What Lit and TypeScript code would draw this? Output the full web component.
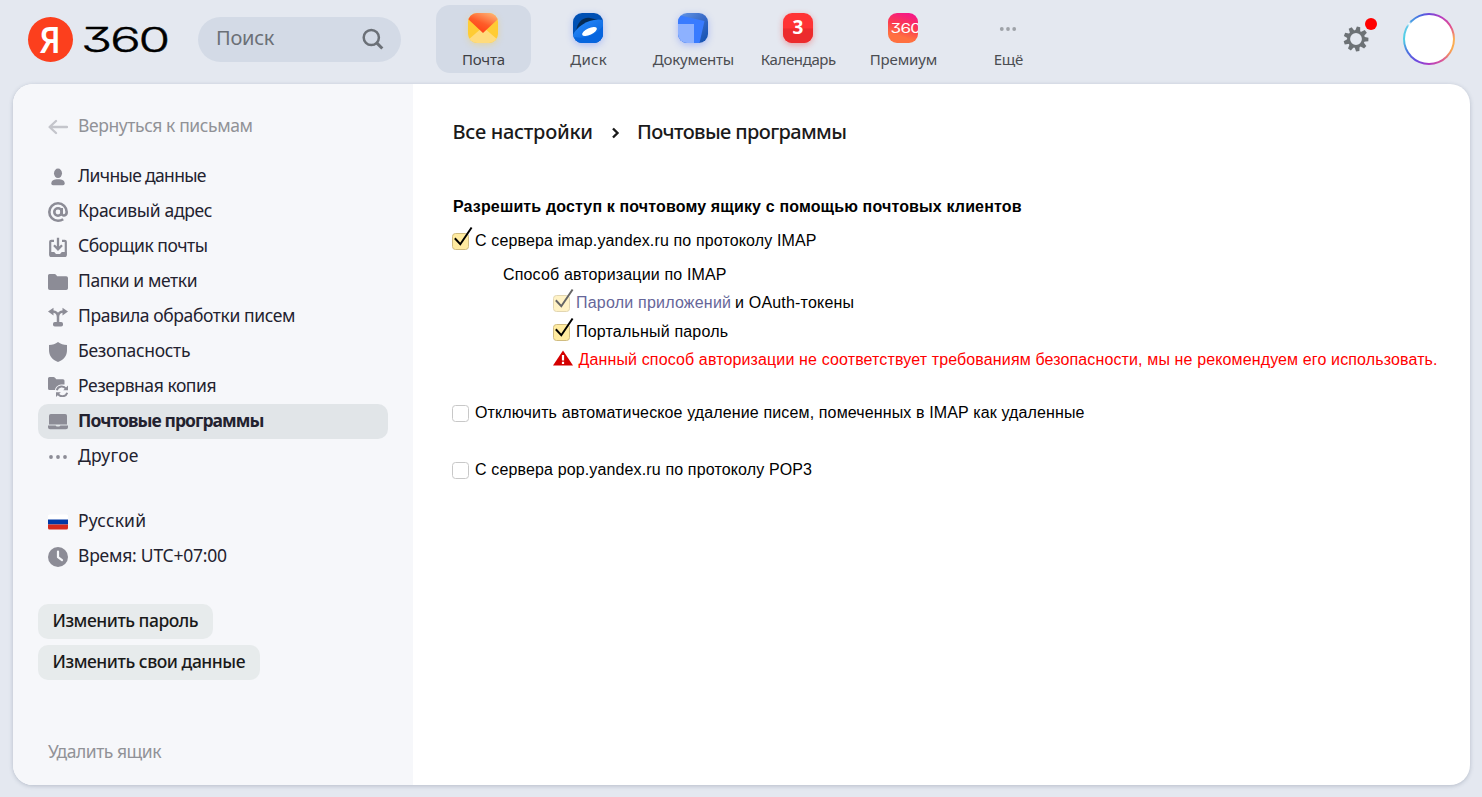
import { LitElement, html, css, svg, nothing } from "lit";
import { customElement, property } from "lit/decorators.js";

/** A single line of text tracked so that it fills a given width. */
@customElement("fit-text")
class FitText extends LitElement {
  @property({ type: Number }) w = 0;
  @property() text = "";

  static styles = css`
    :host { display: block; white-space: pre; }
    .t { display: inline-block; vertical-align: top; }
  `;

  firstUpdated() {
    const el = this.renderRoot.querySelector(".t") as HTMLElement;
    const natural = el.getBoundingClientRect().width;
    const n = Math.max(1, this.text.length - 1);
    this.style.width = `${this.w}px`;
    el.style.letterSpacing = `${((this.w - natural) / n).toFixed(4)}px`;
  }

  render() {
    return html`<span class="t">${this.text}</span>`;
  }
}

const fit = (text: string, w: number, cls = "") =>
  html`<fit-text class=${cls} .text=${text} .w=${w}></fit-text>`;

const G = "#8c8c96";

const icons: Record<string, unknown> = {
  back: svg`<path d="M19 10H1.800M8 4L1.600 10L8 16" fill="none" stroke="#c4c5cb" stroke-width="2.300" stroke-linecap="round" stroke-linejoin="round"/>`,
  person: svg`<ellipse cx="10" cy="6.300" rx="4" ry="4.800" fill=${G}/><path d="M3.300 16.600C3.300 13.600 6 12.300 10 12.300S16.700 13.600 16.700 16.600Q16.700 18.300 15 18.300H5Q3.300 18.300 3.300 16.600Z" fill=${G}/>`,
  at: svg`<g fill="none" stroke=${G} stroke-width="2.600"><circle cx="10" cy="10" r="3.700"/><path d="M13.700 6V11.200C13.700 14.600 18.700 14.400 18.700 10A8.700 8.700 0 1 0 10 18.700C12 18.700 13.600 18.300 15.200 17.200"/></g>`,
  collect: svg`<path d="M6 3.800H3.200Q2.200 3.800 2.200 4.800V17.500Q2.200 18.800 3.400 18.800H16.600Q17.800 18.800 17.800 17.500V4.800Q17.800 3.800 16.800 3.800H14" fill="none" stroke=${G} stroke-width="2.200"/><path d="M1.500 15H6.200L8 17H12L13.800 15H18.500V18.500Q18.500 20 17 20H3Q1.500 20 1.500 18.500Z" fill=${G}/><path d="M10 .8V12M6 8.300L10 12.300L14 8.300" fill="none" stroke=${G} stroke-width="2.300"/>`,
  folder: svg`<path d="M0 3.500Q0 2 1.500 2H6.500Q7.500 2 8.200 2.900L9.200 4.200H18.200Q20 4.200 20 6V16.200Q20 18 18.200 18H1.800Q0 18 0 16.200Z" fill=${G}/>`,
  rules: svg`<path d="M3 4.600H4.500C8 4.600 9.900 6.800 10 10V16M17 4.600H15.500C12 4.600 10.100 6.800 10 10" fill="none" stroke=${G} stroke-width="2.500"/><path d="M0 4.600L5.500 .8V8.400ZM20 4.600L14.500 .8V8.400Z" fill=${G}/><rect x="5" y="15" width="10" height="4.500" rx="1.800" fill=${G}/>`,
  shield: svg`<path d="M10 0C12.500 2 15.500 2.800 19 3V8C19 13.500 16 17.800 10 20C4 17.800 1 13.500 1 8V3C4.500 2.800 7.500 2 10 0Z" fill=${G}/>`,
  backup: svg`<path d="M0 1.500Q0 0 1.500 0H5.500Q6.300 0 7 .8L8.300 2.200H15Q16.500 2.200 16.500 3.700V7.500C11 7 7.500 9 7 13H1.500Q0 13 0 11.500Z" fill=${G}/><g fill="none" stroke=${G} stroke-width="2"><path d="M8.800 13.200C10 8.700 15.800 8.300 18 11.700"/><path d="M19.200 15.700C18 20 12.200 20.400 10 17"/></g><path d="M20 8.500V13.300H15.200ZM8 20V15.300H12.800Z" fill=${G}/>`,
  laptop: svg`<path d="M1 3.800Q1 2 2.800 2H17.200Q19 2 19 3.800V12.500H1Z" fill=${G}/><path d="M0 13.500H7.600Q8.200 14.600 9 14.600H11Q11.800 14.600 12.400 13.500H20V15.200Q20 17.200 18 17.200H2Q0 17.200 0 15.200Z" fill=${G}/>`,
  dots: svg`<g fill=${G}><circle cx="3" cy="10" r="1.900"/><circle cx="10" cy="10" r="1.900"/><circle cx="17" cy="10" r="1.900"/></g>`,
  flag: svg`<path d="M0 4Q0 2.500 1.500 2.500H18.500Q20 2.500 20 4V7.500H0Z" fill="#fff"/><path d="M0 7.500H20V12.500H0Z" fill="#0039a6"/><path d="M0 12.500H20V16Q20 17.500 18.500 17.500H1.500Q0 17.500 0 16Z" fill="#d52b1e"/>`,
  clock: svg`<circle cx="10" cy="10" r="10" fill=${G}/><path d="M10 4.500V10.200L14 13.200" fill="none" stroke="#f6f7fa" stroke-width="2.200" stroke-linecap="round" stroke-linejoin="round"/>`,
};

const apps = [
  {
    name: "Почта", w: 43, kind: "mail", on: true,
    art: svg`<defs><linearGradient id="m" x1=".25" y1="1" x2=".9" y2="0"><stop offset="0" stop-color="#ff3d12"/><stop offset=".45" stop-color="#ff5c28"/><stop offset="1" stop-color="#ffb878"/></linearGradient></defs>
      <rect width="30" height="30" fill="#ffcc33"/><path d="M0 30V27L15 14L30 27V30Z" fill="#ffdb7c"/><path d="M0 0H30V6L15 20L0 6Z" fill="url(#m)"/>`,
  },
  {
    name: "Диск", w: 36.5, kind: "disk",
    art: svg`<defs><linearGradient id="d" x1="0" y1="0" x2=".8" y2="1"><stop offset="0" stop-color="#2b8cff"/><stop offset="1" stop-color="#0561d8"/></linearGradient></defs>
      <rect width="30" height="30" fill="#0050b4"/><path d="M3 19C4 9 10 4 17 5L30 8V16Z" fill="#052b57"/><path d="M0 22C3 14 17 4 30 7V30H0Z" fill="url(#d)"/><path d="M1 24C14 27 25 20 30 13V30H4Z" fill="#0765de"/><ellipse cx="16.500" cy="18.500" rx="8" ry="3.300" transform="rotate(-25 16.500 18.500)" fill="#fff"/>`,
  },
  {
    name: "Документы", w: 81.5, kind: "docs",
    art: svg`<defs><linearGradient id="o" x1="0" y1="0" x2="1" y2="1"><stop offset="0" stop-color="#6597e8"/><stop offset=".5" stop-color="#3a6bc8"/><stop offset="1" stop-color="#0f4fb0"/></linearGradient></defs>
      <rect width="30" height="30" fill="url(#o)"/><path d="M0 2L26.500 8L21.500 30H0Z" fill="#397bff"/><path d="M0 11H16V30H0Z" fill="#8db1ff"/>`,
  },
  {
    name: "Календарь", w: 75.5, kind: "cal",
    art: svg`<rect width="30" height="30" fill="#ff3335"/><rect y="15.500" width="30" height="14.500" fill="#ec2b2d"/><text x="15" y="20.500" text-anchor="middle" class="num">3</text>`,
  },
  {
    name: "Премиум", w: 67.5, kind: "prem",
    art: svg`<defs><linearGradient id="p" x1=".7" y1="0" x2=".4" y2="1"><stop offset="0" stop-color="#f5168a"/><stop offset=".45" stop-color="#fb3b50"/><stop offset=".8" stop-color="#ff7040"/></linearGradient></defs>
      <rect width="30" height="30" fill="url(#p)"/><text x="2.500" y="19.800" textLength="30" lengthAdjust="spacingAndGlyphs" class="p360">360</text>`,
  },
  {
    name: "Ещё", w: 29.5, kind: "more",
    art: svg`<g fill="#9ea2a8"><circle cx="8.800" cy="16" r="1.900"/><circle cx="15" cy="16" r="1.900"/><circle cx="21.200" cy="16" r="1.900"/></g>`,
  },
];

const menu: [string, string, number][] = [
  ["person", "Личные данные", 128.5],
  ["at", "Красивый адрес", 134.5],
  ["collect", "Сборщик почты", 130],
  ["folder", "Папки и метки", 119.5],
  ["rules", "Правила обработки писем", 217.5],
  ["shield", "Безопасность", 112.5],
  ["backup", "Резервная копия", 138.5],
  ["laptop", "Почтовые программы", 186.5],
  ["dots", "Другое", 60.5],
];

@customElement("app-root")
class AppRoot extends LitElement {
  static styles = css`
    :host {
      display: flex; flex-direction: column; box-sizing: border-box;
      width: 100%; height: 797px; overflow: hidden; background: #e4e8f0;
      font-family: "Noto Sans", "Open Sans", sans-serif; color: #23222f;
    }
    svg { display: block; flex: none; }
    header { display: flex; height: 84px; flex: none; padding: 0 27px 0 28px; box-sizing: border-box; }
    .logo { margin-top: 16px; width: 142px; height: 46px; overflow: visible; }
    .ya { font: 600 36px "Noto Sans", sans-serif; fill: #fff; }
    .l360 { font: 300 34px "Inter", sans-serif; font-feature-settings: "cv09"; letter-spacing: -1.500px; fill: #000; stroke: #000; stroke-width: .4px; }
    .search {
      margin: 17px 0 0 28px; width: 203px; height: 45px; border-radius: 23px; background: #d3dae6;
      display: flex; justify-content: space-between; box-sizing: border-box; padding: 7px 17px 0 18px;
      font-size: 20px; line-height: 27px; color: #6b7077;
    }
    .search svg { margin-top: 4px; }
    nav { display: flex; gap: 10px; margin: 5px 0 0 35px; }
    .app {
      width: 95px; height: 68px; border-radius: 14px; display: flex; flex-direction: column; align-items: center;
      box-sizing: border-box; padding-right: 1px;
      font-size: 15px; line-height: 20px; color: #4b4d52;
    }
    .app fit-text { margin-left: 1px; }
    .app.on { background: #d3dae6; color: #3e4045; }
    .tile { margin: 8px 0 6px; width: 30px; height: 30px; border-radius: 9px; }
    .tile svg { border-radius: 9px; }
    .mail { box-shadow: 0 2px 6px rgba(255, 204, 51, .35); }
    .disk, .docs { box-shadow: 0 2px 7px rgba(60, 100, 255, .35); }
    .cal { box-shadow: 0 2px 6px rgba(240, 50, 50, .4); }
    .num { font: 700 19px "Noto Sans", sans-serif; fill: #fff; }
    .p360 { font: 400 13px "Inter", sans-serif; font-feature-settings: "cv09"; letter-spacing: -.500px; fill: #fff; }
    .gear { margin: 17px 0 0 auto; }
    .avatar {
      margin: 13px 0 0 25px; width: 52px; height: 52px; border-radius: 50%; padding: 1.600px; box-sizing: border-box;
      background: conic-gradient(#6f4adb, #b93cc0 30deg, #e04e90 60deg, #fbb055 90deg, #fba84e 115deg, #d8559a 150deg,
        #b03cc4 180deg, #6a4ae0 210deg, #4a74e0 240deg, #4fd0e4 268deg, #62c8ea 300deg, #fff 308deg, #49a0e4 314deg, #4a68e0 340deg, #6f4adb);
    }
    .avatar-in { width: 100%; height: 100%; border-radius: 50%; background: #fff; }

    .panel {
      margin: 0 12px 12px 13px; flex: 1; display: flex; border-radius: 20px; overflow: hidden; background: #fff;
      box-shadow: 0 1px 4px rgba(60, 75, 100, .28);
    }
    aside { width: 400px; flex: none; background: #f6f7fa; padding: 25px 25px 0; box-sizing: border-box; font-size: 17.500px; }
    .row { height: 35px; display: flex; align-items: center; padding-left: 10px; border-radius: 10px; box-sizing: border-box; }
    .row fit-text { margin: 0 0 3px 10px; line-height: 24px; }
    .row svg { margin-top: 1px; }
    .row.on { background: #e1e5e8; font-weight: 700; }
    .back { margin-bottom: 15px; color: #919297; }
    .lang { margin-top: 30px; }
    .btns { display: flex; flex-direction: column; align-items: flex-start; gap: 6px; margin-top: 30px; }
    .btn {
      height: 35px; box-sizing: border-box; padding: 4px 14.500px 0; border-radius: 10px; background: #e7ebec;
      color: #1a1a1a; font-weight: 500; line-height: 24px;
    }
    .del { margin-top: 55px; color: #919297; }
    .row.del fit-text { margin-left: 0; }

    main { padding: 35px 0 0 39px; flex: 1; font: 16px/18px "Liberation Sans", Arial, sans-serif; color: #000; }
    .crumbs {
      display: flex; height: 27px; margin: 0 0 52px .500px; font: 500 20px/26px "Noto Sans", sans-serif; color: #1a1a1a;
    }
    .crumbs svg { margin: 8px 17.500px 0; }
    .bold { font-weight: 700; padding-left: 1px; }
    .line { display: flex; height: 18px; }
    .line svg { overflow: visible; margin-right: 1px; }
    .g16 { margin-top: 16px; }
    .auth { margin: 16px 0 0 51px; }
    .methods { margin: 10px 0 0 101px; }
    .second { margin-top: 11px; }
    .third { margin-top: 10px; }
    .dim svg { opacity: .6; }
    .link { color: #669; margin-right: 4px; }
    .red { color: #f00; }
    .third svg { margin-right: 5.500px; }
    .del-off { margin-top: 35px; }
    .pop { margin-top: 39px; }
  `;

  private icon(name: string) {
    return html`<svg width="20" height="20" viewBox="0 0 20 20">${icons[name]}</svg>`;
  }

  private check(on: boolean) {
    return html`<svg width="22" height="18" viewBox="0 0 22 18">
      <rect x=".5" y="1.500" width="16" height="16" rx="3" fill=${on ? "#ffeba0" : "#fff"} stroke=${on ? "#d0bc80" : "#c8c8c8"}/>
      ${on ? svg`<path d="M2.800 6.300L8.300 12.200L19.600 -4.500" fill="none" stroke="#000" stroke-width="2"/>` : nothing}
    </svg>`;
  }

  private gear() {
    const teeth = Array.from({ length: 9 }, (_, i) =>
      svg`<path d="M-2.600 -7.500L-1.700 -12.400H1.700L2.600 -7.500Z" transform=${`rotate(${12 + i * 40})`}/>`);
    return html`<svg class="gear" width="36" height="36" viewBox="0 0 36 36">
      <g transform="translate(14 22)" fill="#6d7276">${teeth}
        <circle r="7.400" fill="none" stroke="#6d7276" stroke-width="3"/></g>
      <circle cx="29" cy="7" r="6" fill="#f00"/>
    </svg>`;
  }

  render() {
    return html`
      <header>
        <svg class="logo" width="142" height="46" viewBox="0 0 142 46">
          <circle cx="22.500" cy="23.500" r="22.500" fill="#fc3f1d"/>
          <text class="ya" x="11.200" y="37" textLength="21.500" lengthAdjust="spacingAndGlyphs">Я</text>
          <text class="l360" x="53" y="35.500" textLength="87" lengthAdjust="spacingAndGlyphs">360</text>
        </svg>
        <div class="search">
          ${fit("Поиск", 58.5)}
          <svg width="22" height="22" viewBox="0 0 22 22">
            <g fill="none" stroke="#6b7077" stroke-width="2.500"><circle cx="9.300" cy="9.500" r="7.600"/><path d="M14.700 14.900L20.300 20.500" stroke-width="3"/></g>
          </svg>
        </div>
        <nav>
          ${apps.map((a) => html`<div class="app ${a.on ? "on" : ""}">
            <div class="tile ${a.kind}"><svg width="30" height="30" viewBox="0 0 30 30">${a.art}</svg></div>
            ${fit(a.name, a.w)}
          </div>`)}
        </nav>
        ${this.gear()}
        <div class="avatar"><div class="avatar-in"></div></div>
      </header>
      <div class="panel">
        <aside>
          <div class="row back">${this.icon("back")}${fit("Вернуться к письмам", 175)}</div>
          ${menu.map(([i, t, w]) => html`<div class="row ${i === "laptop" ? "on" : ""}">${this.icon(i)}${fit(t, w)}</div>`)}
          <div class="row lang">${this.icon("flag")}${fit("Русский", 68)}</div>
          <div class="row">${this.icon("clock")}${fit("Время: UTC+07:00", 149)}</div>
          <div class="btns">
            <div class="btn">${fit("Изменить пароль", 146)}</div>
            <div class="btn">${fit("Изменить свои данные", 193)}</div>
          </div>
          <div class="row del">${fit("Удалить ящик", 113.5)}</div>
        </aside>
        <main>
          <div class="crumbs">
            ${fit("Все настройки", 140.5)}
            <svg width="9" height="12" viewBox="0 0 9 12"><path d="M2 1.500L6.500 6L2 10.500" fill="none" stroke="#1a1a1a" stroke-width="2.400"/></svg>
            ${fit("Почтовые программы", 210)}
          </div>
          <div class="line bold">${fit("Разрешить доступ к почтовому ящику с помощью почтовых клиентов", 568.5)}</div>
          <div class="line g16">${this.check(true)}${fit("С сервера imap.yandex.ru по протоколу IMAP", 341.5)}</div>
          <div class="line auth">${fit("Способ авторизации по IMAP", 223.5)}</div>
          <div class="methods">
            <div class="line dim">${this.check(true)}${fit("Пароли приложений", 155, "link")}${fit("и OAuth-токены", 119)}</div>
            <div class="line second">${this.check(true)}${fit("Портальный пароль", 152)}</div>
            <div class="line third red">
              <svg width="20" height="18" viewBox="0 0 20 18"><path d="M10 -.5L20 14.500H0Z" fill="#d40000"/><path d="M10 4V9.600M10 10.800V13" stroke="#fff" stroke-width="2.200"/></svg>
              ${fit("Данный способ авторизации не соответствует требованиям безопасности, мы не рекомендуем его использовать.", 859)}
            </div>
          </div>
          <div class="line del-off">${this.check(false)}${fit("Отключить автоматическое удаление писем, помеченных в IMAP как удаленные", 609.5)}</div>
          <div class="line pop">${this.check(false)}${fit("С сервера pop.yandex.ru по протоколу POP3", 337)}</div>
        </main>
      </div>
    `;
  }
}
